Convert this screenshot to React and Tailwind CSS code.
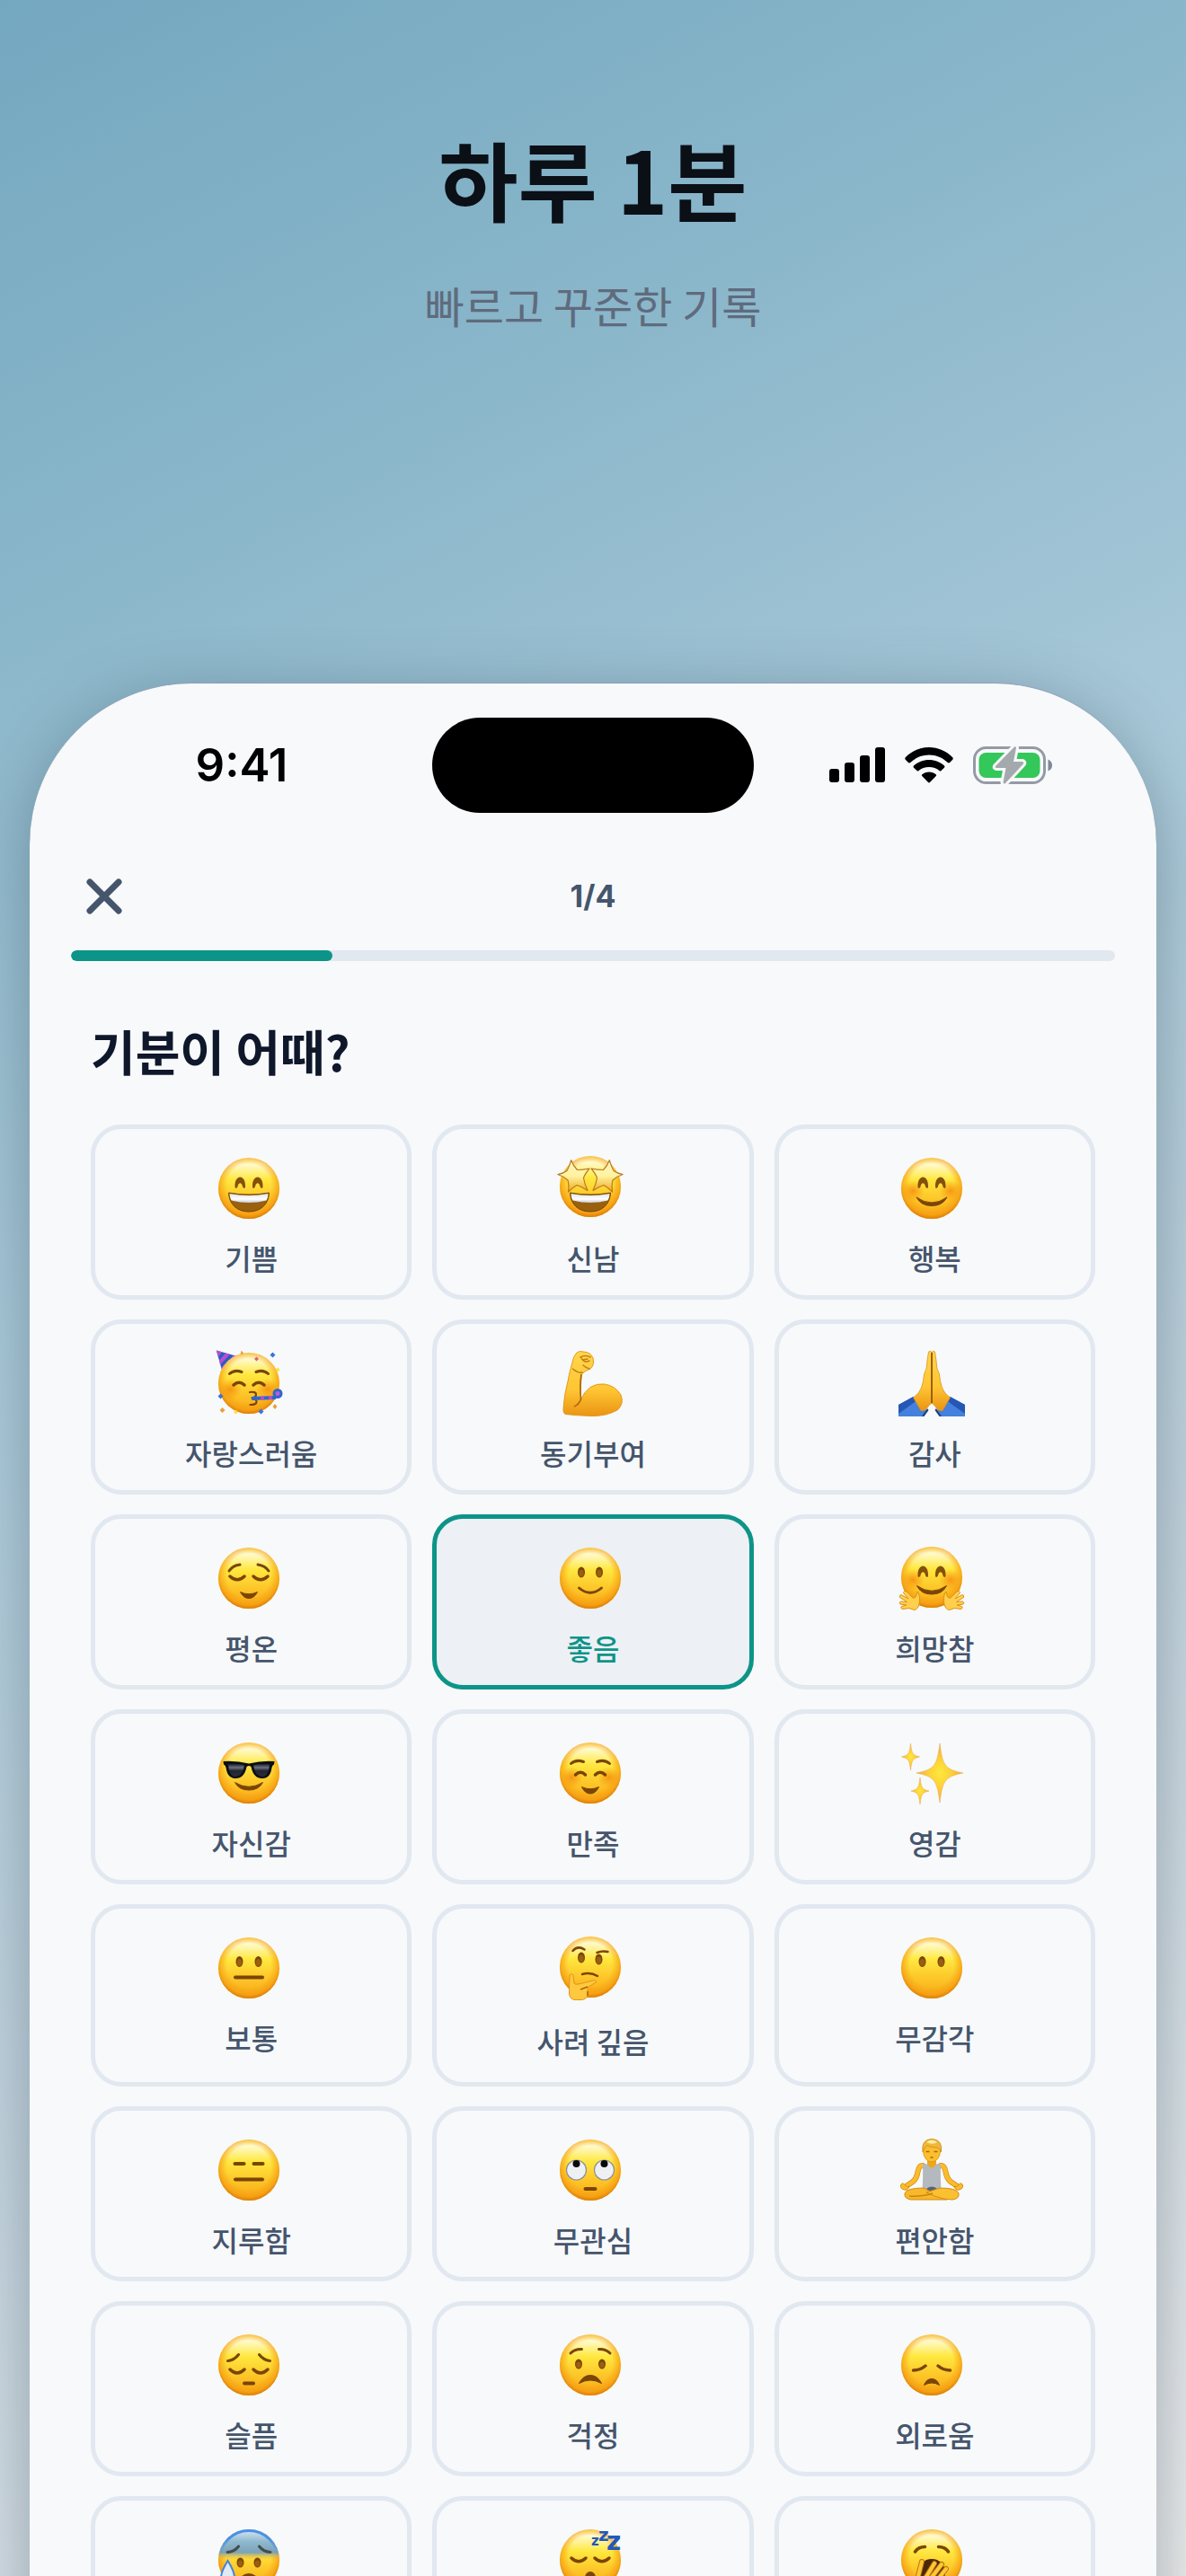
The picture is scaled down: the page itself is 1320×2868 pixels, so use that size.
import { useState } from "react";

const BROWN = "#7a4505";

/* Shared gradients used by every mood drawing. */
function EmojiDefs() {
  return (
    <svg className="absolute h-0 w-0" aria-hidden="true">
      <defs>
        <linearGradient id="skin" x1="0" y1="0" x2="0" y2="1">
          <stop offset="0" stopColor="#fff08a" />
          <stop offset="0.1" stopColor="#fffbd0" />
          <stop offset="0.36" stopColor="#ffe83f" />
          <stop offset="0.62" stopColor="#fdcb2c" />
          <stop offset="1" stopColor="#f8a614" />
        </linearGradient>
        <radialGradient id="rim" cx="0.5" cy="0.46" r="0.54">
          <stop offset="0.66" stopColor="#f59a10" stopOpacity="0" />
          <stop offset="0.88" stopColor="#f59a10" stopOpacity="0.65" />
          <stop offset="1" stopColor="#d97c08" />
        </radialGradient>
        <radialGradient id="blush">
          <stop offset="0" stopColor="#f5870c" stopOpacity="0.8" />
          <stop offset="1" stopColor="#f5930c" stopOpacity="0" />
        </radialGradient>
        <linearGradient id="chill" x1="0" y1="0" x2="0" y2="1">
          <stop offset="0" stopColor="#dbe8f2" />
          <stop offset="0.2" stopColor="#8fb9cf" />
          <stop offset="0.38" stopColor="#7ba3b8" />
          <stop offset="0.5" stopColor="#f5b63c" stopOpacity="0" />
        </linearGradient>
        <linearGradient id="chillRim" x1="0" y1="0" x2="0" y2="1">
          <stop offset="0.15" stopColor="#4a90e8" />
          <stop offset="0.4" stopColor="#4a90e8" stopOpacity="0" />
        </linearGradient>
        <linearGradient id="hand" x1="0" y1="0" x2="0" y2="1">
          <stop offset="0" stopColor="#ffd64d" />
          <stop offset="0.6" stopColor="#ffc533" />
          <stop offset="1" stopColor="#ea9413" />
        </linearGradient>
        <linearGradient id="star" x1="0" y1="0" x2="0" y2="1">
          <stop offset="0" stopColor="#fff6c4" />
          <stop offset="0.5" stopColor="#fff2a0" />
          <stop offset="1" stopColor="#f0a81c" />
        </linearGradient>
        <radialGradient id="spark">
          <stop offset="0" stopColor="#ffe83c" />
          <stop offset="0.5" stopColor="#fcd038" />
          <stop offset="1" stopColor="#efa93a" />
        </radialGradient>
        <linearGradient id="lens" x1="0" y1="0" x2="0" y2="1">
          <stop offset="0" stopColor="#10131c" />
          <stop offset="0.3" stopColor="#6c7282" />
          <stop offset="0.55" stopColor="#23262f" />
          <stop offset="1" stopColor="#2a2d36" />
        </linearGradient>
        <linearGradient id="teeth" x1="0" y1="0" x2="0" y2="1">
          <stop offset="0" stopColor="#dfe4ea" />
          <stop offset="0.6" stopColor="#ffffff" />
          <stop offset="1" stopColor="#c3ccd6" />
        </linearGradient>
      </defs>
    </svg>
  );
}

/* Left half of a symmetric feature plus its reflection around x = 37. */
function Pair({ children }) {
  return (
    <>
      {children}
      <g transform="matrix(-1 0 0 1 74 0)">{children}</g>
    </>
  );
}

function Face({ cy = 40 }) {
  return (
    <>
      <circle cx="37" cy={cy} r="34" fill="url(#skin)" />
      <circle cx="37" cy={cy} r="34" fill="url(#rim)" />
    </>
  );
}

function Line({ d, w = 3 }) {
  return <path d={d} fill="none" stroke={BROWN} strokeWidth={w} strokeLinecap="round" strokeLinejoin="round" />;
}

function Oval({ cx, cy, rx = 4, ry = 6 }) {
  return (
    <>
      <ellipse cx={cx} cy={cy} rx={rx} ry={ry} fill="#7a4505" />
      <ellipse cx={cx} cy={cy + 1} rx={rx - 1.2} ry={ry - 2} fill="#9a5f10" />
    </>
  );
}

function Blush({ cy = 46 }) {
  return (
    <Pair>
      <ellipse cx="16" cy={cy} rx="13" ry="12" fill="url(#blush)" />
    </Pair>
  );
}

function ArchEyes({ y = 0 }) {
  return (
    <Pair>
      <path
        d={`M21.5 ${38 + y}C21 ${24 + y} 33.500 ${24 + y} 33 ${38 + y}C33 ${41 + y} 30.500 ${40 + y} 30 ${38 + y}C29 ${33 + y} 25.500 ${33 + y} 24.500 ${38 + y}C24 ${40 + y} 21.500 ${41 + y} 21.500 ${38 + y}Z`}
        fill="#85500a"
      />
    </Pair>
  );
}

function Grin() {
  return (
    <>
      <path d="M14.500 45Q37 49 59.500 45C59 58 50 66 37 66S15 58 14.500 45Z" fill="#99600f" stroke={BROWN} />
      <path d="M15.500 46Q37 50 58.500 46Q58.500 50 56.500 53.500Q37 58.500 17.500 53.500Q15.500 50 15.500 46Z" fill="url(#teeth)" />
    </>
  );
}

function Star({ flip }) {
  return (
    <path
      transform={flip ? "matrix(-1 0 0 1 74 0)" : undefined}
      d="M.8 24.500Q7 23.500 11 20.500Q14 15 15.700 8.700Q18 15 22.500 19.500Q29 19.500 36 18Q31 24 29.500 28.500Q30.500 35 34 42.500Q27 38 22 36.500Q17.500 39 12.500 44Q13.500 36 12 31Q7 26.500 .8 24.500Z"
      fill="url(#star)"
      stroke="#b97a1c"
      strokeWidth="1.200"
      strokeLinejoin="round"
    />
  );
}

function Spark({ x, y, w, h }) {
  return (
    <path
      d={`M${x} ${y - h}C${x + w * 0.12} ${y - h * 0.25} ${x + w * 0.22} ${y - h * 0.12} ${x + w} ${y}C${x + w * 0.22} ${y + h * 0.12} ${x + w * 0.12} ${y + h * 0.25} ${x} ${y + h}C${x - w * 0.12} ${y + h * 0.25} ${x - w * 0.22} ${y + h * 0.12} ${x - w} ${y}C${x - w * 0.22} ${y - h * 0.12} ${x - w * 0.12} ${y - h * 0.25} ${x} ${y - h}Z`}
      fill="url(#spark)"
      stroke="#f0b04c"
      strokeWidth="0.600"
    />
  );
}

const drawings = {
  joy: (
    <>
      <Face />
      <ArchEyes />
      <Grin />
    </>
  ),
  starStruck: (
    <>
      <Face cy={38} />
      <Grin />
      <Star />
      <Star flip />
    </>
  ),
  happy: (
    <>
      <Face />
      <Blush cy={43} />
      <ArchEyes />
      <path d="M20 50Q37 62 54 50Q49 59.500 37 59.500T20 50Z" fill={BROWN} stroke={BROWN} strokeLinejoin="round" />
    </>
  ),
  party: (
    <>
      <path d="M.8 3.500L24 10L7.500 27Z" fill="#2b5cc4" />
      <path d="M.8 3.500L7 5.200L3 11Z M11 6.500L16 7.800L5 19.500L4 14.500Z M20 9L24 10L7.500 27L6.500 22.500Z" fill="#b34fd0" />
      <Face />
      <Blush cy={47} />
      <Pair>
        <Line d="M15.500 29.500Q21 24.500 29 27.500" />
        <Line d="M20 42Q26 36.500 32 42" w={3.5} />
      </Pair>
      <Line d="M38 50Q45 49 45 52.500T40.500 56.500Q46 58 45.500 61T38.500 64" w={2.2} />
      <path d="M40 57L67 56" stroke="#2f66cf" strokeWidth="4" />
      <path d="M50 56.500h4M59 56h4" stroke="#b34fd0" strokeWidth="4" />
      <circle cx="69" cy="51.500" r="4" fill="#c05ad8" stroke="#2f66cf" strokeWidth="3" />
      <g fill="#3b73dc">
        <path d="M63.500 5.500l3 3l-3 3l-3-3z M5.500 51.500l3 3l-3 3l-3-3z M50.500 68.500l3 3l-3 3l-3-3z" />
      </g>
      <g fill="#e9a03a">
        <path d="M7.500 67l3 3l-3 3l-3-3z M66 63l2.500 3l-2.500 3l-2.500-3z M28.500 3.500l3 3.500l-4 1z" />
      </g>
      <path d="M22.500 69.500l2.500 2.500l-2.500 2.500l-2.500-2.500z M69 22.500l2.500 2.500l-2.500 2.500l-2.500-2.500z" fill="#ffdf3a" />
      <path d="M45.500 10.500l2.500 2.500l-2.500 2.500l-2.500-2.500z" fill="#d8637e" />
    </>
  ),
  muscle: (
    <>
      <path
        d="M17 17Q18 10 22 6Q25 3.500 29 5Q34 5 37 7.500Q41 11 40.500 16Q40.500 22 36 24.500Q31 26 27.500 30Q26 40 26.500 58Q30 50 37 44.500Q44 40 53 41Q65 43 71 53Q75 63 67 70Q54 77 38 76.500Q22 76 9 74.500Q6.500 73 7 68Q8 52 12 38Q13.500 28 17 17Z"
        fill="url(#hand)"
        stroke="#e39a1c"
      />
      <path d="M27 30Q25 42 26.500 58Q24 64 19 66" fill="none" stroke="#a9650c" strokeWidth="1.600" />
      <path d="M17.500 24Q23 29 28 28M26 11Q32 8 37 11M27 12Q30 18 36 15M29 14l5-1M36 24Q31 22 29 20" fill="none" stroke="#c47e12" strokeWidth="1.500" strokeLinecap="round" />
    </>
  ),
  pray: (
    <>
      <Pair>
        <path d="M0 64L16.500 55L26 69L31 69.500L27 77H0Z" fill="#4480dd" />
        <path d="M0 64L16.500 55L19.500 60L0 74Z" fill="#2557b5" />
        <path d="M26 77L32 68L33.500 70L28.500 77Z" fill="#1c3f83" />
        <path d="M33.500 5Q36 3 37 6V62Q33 65 31.500 68Q29 71.500 25 70.500L16.500 56Q23 52 25.500 45Q28 38 28.500 30Q32 24 32 15Z" fill="url(#hand)" stroke="#dd9014" strokeWidth="0.800" />
      </Pair>
      <path d="M37 6V62" stroke="#95590a" strokeWidth="1.800" />
    </>
  ),
  calm: (
    <>
      <Face />
      <Pair>
        <Line d="M15 32Q19 26 27 25" />
        <Line d="M16 38Q24 45.500 32 38" w={3.5} />
      </Pair>
      <path d="M27.500 55.500Q37 60 46.500 55.500Q43 62.500 37 62.500T27.500 55.500Z" fill={BROWN} stroke={BROWN} strokeLinejoin="round" />
    </>
  ),
  good: (
    <>
      <Face />
      <Pair>
        <Oval cx={27} cy={33.5} />
      </Pair>
      <Line d="M24.500 51Q37 61.500 49.500 51" w={2.8} />
    </>
  ),
  hug: (
    <>
      <Face cy={39} />
      <Blush cy={42} />
      <ArchEyes y={-1} />
      <path d="M20.500 48.500Q37 60 53.500 48.500Q49 58 37 58T20.500 48.500Z" fill={BROWN} stroke={BROWN} strokeLinejoin="round" />
      <Pair>
        <path
          d="M21 55Q24 58 23.500 66Q23 73 18.500 75.500Q15 75 12 73.500L4 74.500Q1.500 73 3.500 71.500L9 70L2 69Q0 67 2.500 66L9.500 66.500L1.500 61.500Q.500 59 3 58.500L11 63L5.500 56.500Q6 53.500 9 55L16.500 62.500Q19.500 62 20 59Z"
          fill="#ffcf4d"
          stroke="#dd9116"
        />
      </Pair>
    </>
  ),
  cool: (
    <>
      <Face />
      <path d="M8.500 27Q23 26 37 29.500Q51 26 65.500 27L65 30.500Q63 31 62.500 34Q61 46 52 46Q42 46 39.500 33Q37 31 34.500 33Q32 46 22 46Q13 46 11.500 34Q11 31 9 30.500Z" fill="#0b0e17" />
      <Pair>
        <path d="M14 30Q24 28.500 32 31.500Q30 44 22 44Q15 44 14 30Z" fill="url(#lens)" />
      </Pair>
      <path d="M21.500 50.500Q37 60 52.500 50.500Q48 59 37 59T21.500 50.500Z" fill={BROWN} stroke={BROWN} strokeLinejoin="round" />
    </>
  ),
  content: (
    <>
      <Face />
      <Blush cy={45} />
      <Pair>
        <Line d="M15.500 29.500Q21 24.500 29.500 27.500" />
        <Line d="M20.500 42Q26 36.500 31.500 42" w={3.5} />
      </Pair>
      <path d="M27.500 55.500Q37 60 46.500 55.500Q43 63 37 63T27.500 55.500Z" fill={BROWN} stroke={BROWN} strokeLinejoin="round" />
    </>
  ),
  sparkles: (
    <>
      <Spark x={46} y={40} w={26} h={33} />
      <Spark x={13.5} y={22} w={10} h={15} />
      <Spark x={24} y={60} w={10} h={15} />
    </>
  ),
  neutral: (
    <>
      <Face />
      <Pair>
        <Oval cx={26.5} cy={33} />
      </Pair>
      <Line d="M22 50.500H52" w={4} />
    </>
  ),
  thinking: (
    <>
      <Face cy={39} />
      <Line d="M17.500 21Q23 14.500 30.500 19.500" w={2.5} />
      <Line d="M44.500 23Q50 20.500 56.500 22" w={2.5} />
      <Oval cx={27} cy={28.5} />
      <Oval cx={46.5} cy={30.5} />
      <Line d="M28 47Q37 44.500 45 49" w={2.5} />
      <path d="M14 49Q15 45 18 48L19 57Q20 59 24 58L40 54Q44 53.500 43.500 56L34 61.500V70Q33 75 27 75.500H19Q13.500 74 13.500 68Z" fill="#ffc93f" stroke="#e2951a" />
      <path d="M34 61L26 64M34 66v5" fill="none" stroke="#a9650c" strokeWidth="1.500" />
    </>
  ),
  blank: (
    <>
      <Face />
      <Pair>
        <Oval cx={26.5} cy={33} />
      </Pair>
    </>
  ),
  bored: (
    <>
      <Face />
      <Pair>
        <Line d="M21.500 33H31.500" w={4} />
      </Pair>
      <Line d="M22 50.500H52" w={4} />
    </>
  ),
  eyeRoll: (
    <>
      <Face />
      <Pair>
        <circle cx="21.500" cy="40" r="11" fill="#eef0f4" stroke="#8a8f9a" strokeWidth="1.200" />
        <circle cx="21.500" cy="33" r="4" fill="#0a0a0c" />
      </Pair>
      <Line d="M31.500 61H42.500" w={4} />
    </>
  ),
  yoga: (
    <>
      <path d="M32 28H42V38H32Z" fill="#eea81f" />
      <Pair>
        <path d="M27 35Q22.500 35 21.500 42Q20.500 49 16 53L8.500 58" fill="none" stroke="#d98f16" strokeWidth="6" strokeLinecap="round" strokeLinejoin="round" />
        <path d="M27 35Q22.500 35 21.500 42Q20.500 49 16 53L8.500 58" fill="none" stroke="#fbbc2b" strokeWidth="4.500" strokeLinecap="round" strokeLinejoin="round" />
        <path d="M2.500 57Q4 53 7 56.500T12 58Q11 63 6.500 62T2.500 57Z" fill="#fbbc2b" stroke="#d98f16" />
      </Pair>
      <path d="M27 34Q31 32 32 34Q37 41 42 34Q43 32 47 34Q46.500 46 47.500 64H26.500Q27.500 46 27 34Z" fill="#b3b9bf" />
      <path d="M32 60Q37 57 42 60L44 70H30Z" fill="#566178" />
      <path d="M28 60L54 73H14Q6 72 7 66Q9 60 28 60Z" fill="#f8b829" stroke="#d48a12" />
      <path d="M46 60Q65 60 67 66Q68 72 60 73Q50 73 40 69L31 65Z" fill="#fbc02f" stroke="#d48a12" />
      <path d="M12 69Q24 70 38 66" fill="none" stroke="#c98410" strokeWidth="1.500" />
      <ellipse cx="37" cy="19" rx="9.500" ry="12" fill="#fbbf2e" stroke="#d98f16" strokeWidth="0.800" />
      <path d="M27 20Q25 6 37 5.500Q49.500 6 47.500 20Q46.500 16 43 15Q35 15 32 12.500Q29 15 27 20Z" fill="#f0b83a" stroke="#c9881a" strokeWidth="0.800" />
      <path d="M31 9Q37 4.500 43 9Q38 12.500 31 9Z" fill="#fff0a0" />
      <path d="M30.500 19.500h4M39.500 19.500h4M35.500 26h3" stroke="#a9680c" strokeWidth="1.500" />
    </>
  ),
  sad: (
    <>
      <Face />
      <Pair>
        <Line d="M13.500 35.500Q21 34.500 25.500 28.500" />
        <Line d="M16 45Q24 53 32 45" w={3.5} />
      </Pair>
      <Line d="M32 60.500H42" w={4} />
    </>
  ),
  worried: (
    <>
      <Face />
      <Pair>
        <Line d="M15 27Q20 22 27.500 22.500" />
        <Oval cx={24} cy={39} rx={4} ry={5.5} />
      </Pair>
      <path d="M24.500 60.500Q29 51.500 37 51.500T49.500 60.500Q37 53.500 24.500 60.500Z" fill={BROWN} stroke={BROWN} strokeLinejoin="round" />
    </>
  ),
  lonely: (
    <>
      <Face />
      <Pair>
        <Line d="M16.500 46Q24 46 30 41" w={3.5} />
      </Pair>
      <path d="M28.500 62.500Q31 55.500 37 55.500T45.500 62.500Q37 57.500 28.500 62.500Z" fill={BROWN} stroke={BROWN} strokeLinejoin="round" />
    </>
  ),
  anxious: (
    <>
      <Face />
      <circle cx="37" cy="40" r="34" fill="url(#chill)" />
      <circle cx="37" cy="40" r="32.500" fill="none" stroke="url(#chillRim)" strokeWidth="3" />
      <Pair>
        <path d="M13 31.500Q21 31 25.500 25" fill="none" stroke="#454c50" strokeWidth="3" strokeLinecap="round" />
        <Oval cx={27.5} cy={43} rx={4} ry={5.5} />
      </Pair>
      <Line d="M28 61Q37 52 46 61" w={3} />
      <path d="M13.500 41Q21 53 21 60Q20 67 13.500 67T6 60Q6 53 13.500 41Z" fill="#dfeaf4" stroke="#3f83dd" strokeWidth="2" />
    </>
  ),
  tired: (
    <>
      <Face />
      <Pair>
        <Line d="M16 38Q24 45.500 32 38" w={3.5} />
      </Pair>
      <ellipse cx="37" cy="60" rx="6" ry="7" fill={BROWN} />
      <g fill="#2558b8" fontFamily="'DejaVu Sans', sans-serif" fontWeight="700">
        <text x="38" y="24" fontSize="15">z</text>
        <text x="46" y="19" fontSize="20">z</text>
        <text x="55" y="29" fontSize="28">z</text>
      </g>
    </>
  ),
  yawn: (
    <>
      <Face />
      <Pair>
        <Line d="M18.500 31Q22 25.500 29.500 25.500" w={3.5} />
      </Pair>
      <ellipse cx="37" cy="54" rx="15" ry="15" fill="#4a2808" />
      <path d="M21 62L26 42M29 62L40 44M35 62L48 45M42 64L53 50" fill="none" stroke="#b87610" strokeWidth="6" strokeLinecap="round" />
      <path d="M21 62L26 42M29 62L40 44M35 62L48 45M42 64L53 50" fill="none" stroke="#ffc736" strokeWidth="4" strokeLinecap="round" />
    </>
  ),
};

const moods = [
  { id: "joy", label: "기쁨" },
  { id: "starStruck", label: "신남" },
  { id: "happy", label: "행복" },
  { id: "party", label: "자랑스러움" },
  { id: "muscle", label: "동기부여" },
  { id: "pray", label: "감사" },
  { id: "calm", label: "평온" },
  { id: "good", label: "좋음" },
  { id: "hug", label: "희망참" },
  { id: "cool", label: "자신감" },
  { id: "content", label: "만족" },
  { id: "sparkles", label: "영감" },
  { id: "neutral", label: "보통" },
  { id: "thinking", label: "사려 깊음" },
  { id: "blank", label: "무감각" },
  { id: "bored", label: "지루함" },
  { id: "eyeRoll", label: "무관심" },
  { id: "yoga", label: "편안함" },
  { id: "sad", label: "슬픔" },
  { id: "worried", label: "걱정" },
  { id: "lonely", label: "외로움" },
  { id: "anxious", name: "불안" },
  { id: "tired", name: "피곤" },
  { id: "yawn", name: "지침" },
];

function MoodCard({ id, label, name, selected, onSelect }) {
  return (
    <button
      type="button"
      aria-pressed={selected}
      aria-label={name}
      onClick={onSelect}
      className={
        selected
          ? "flex flex-col items-center justify-start rounded-[34px] border-5 border-[#0d9488] bg-[#edf0f5] pt-[26px] pb-[22px] text-[#0d9488]"
          : "flex flex-col items-center justify-start rounded-[34px] border-5 border-slate-200 pt-[26px] pb-[22px] text-slate-600"
      }
    >
      <svg viewBox="0 0 80 80" className="size-20 shrink-0" aria-hidden="true">
        {drawings[id]}
      </svg>
      {label && (
        <span className={label.includes(" ") ? "mt-[17px] text-[32px] leading-12 font-medium" : "mt-[17px] text-[32px] leading-10 font-medium"}>
          {label}
        </span>
      )}
    </button>
  );
}

function StatusIcons() {
  return (
    <div className="flex items-center gap-[22px]">
      <svg viewBox="0 0 62 40" className="h-10 w-[62px]" aria-hidden="true">
        <rect x="0" y="24" width="11" height="15" rx="3" />
        <rect x="17" y="17" width="11" height="22" rx="3" />
        <rect x="34" y="9" width="11" height="30" rx="3" />
        <rect x="51" y="0" width="11" height="39" rx="3" />
      </svg>
      <svg viewBox="0 0 54 40" className="h-10 w-[54px]" aria-hidden="true">
        <path d="M27 0C37 0 46 4 53 11Q54.500 12.500 53 14L50 17Q49 18 47.500 16.800C42 11.500 35 8.500 27 8.500S12 11.500 6.500 16.800Q5 18 4 17L1 14Q-.5 12.500 1 11C8 4 17 0 27 0Z" />
        <path d="M27 14C33.500 14 39.500 16.500 44 20.500Q45 21.700 44 22.700L40.500 26Q39.500 27 38.500 26C35.500 23.500 31.500 22 27 22S18.500 23.500 15.500 26Q14.500 27 13.500 26L10 22.700Q9 21.700 10 20.500C14.500 16.500 20.500 14 27 14Z" />
        <path d="M27 27.500C30 27.500 33 28.500 35 30.500Q35.500 31.300 34.800 32L28.200 38.800Q27 40 25.800 38.800L19.200 32Q18.500 31.300 19 30.500C21 28.500 24 27.500 27 27.500Z" />
      </svg>
      <svg viewBox="0 0 88 44" className="h-11 w-[88px]" aria-hidden="true">
        <rect x="1.500" y="2.500" width="78" height="39" rx="13" fill="none" stroke="#949aa5" strokeWidth="3" />
        <path d="M83.500 15.500Q88 17.500 88 22T83.500 28.500Z" fill="#7d8896" />
        <rect x="6.500" y="8" width="68" height="28" rx="8" fill="#34c759" />
        <path
          d="M46 1.500L25 23Q24 25 26.500 25H36.500L33.500 41Q34 43.500 36 42L56 20.500Q57 18.500 54.500 18H45L48 2.500Q47.500 .5 46 1.500Z"
          fill="#a4a9ad"
          stroke="#f7f9fb"
          strokeWidth="6"
          strokeLinejoin="round"
          paintOrder="stroke"
        />
      </svg>
    </div>
  );
}

export default function App() {
  const [selected, setSelected] = useState("good");

  return (
    <div className="relative flex h-screen flex-col overflow-hidden bg-[linear-gradient(153deg,#74a8c0_0%,#88b5c9_18%,#a9c9d9_42%,#c5d5df_68%,#ececec_100%)] font-['Inter','Noto_Sans_CJK_KR',sans-serif]">
      <EmojiDefs />
      <header className="shrink-0 pt-[138px] text-center">
        <h1 className="font-['Noto_Sans_CJK_KR',sans-serif] text-8xl leading-[120px] font-bold text-[#0b0f16]">하루 1분</h1>
        <p className="mt-[49px] font-['Noto_Sans_CJK_KR',sans-serif] text-5xl leading-16 text-[#5f6b7d]">빠르고 꾸준한 기록</p>
      </header>

      <main className="mx-[33px] mt-[389px] flex-none rounded-t-[180px] border-t border-slate-400 bg-[#f7f9fb] shadow-[0_16px_70px_rgba(40,60,75,0.38)]">
        <div className="grid grid-cols-[1fr_358px_1fr] items-center pt-[38px]">
          <time className="pl-6 text-center text-[51px] leading-16 font-semibold text-black">9:41</time>
          <div className="h-[106px] rounded-full bg-black" />
          <div className="flex justify-center pr-8">
            <StatusIcons />
          </div>
        </div>

        <div className="mt-[65px] px-[46px]">
          <div className="grid h-14 grid-cols-3 items-center px-[17px]">
            <button type="button" aria-label="닫기" className="size-10 text-slate-600">
              <svg viewBox="0 0 40 40" className="size-10" aria-hidden="true">
                <path d="M4 4L36 36M36 4L4 36" fill="none" stroke="currentColor" strokeWidth="7" strokeLinecap="round" />
              </svg>
            </button>
            <span className="text-center text-[34px] leading-10 font-bold text-slate-600">1/4</span>
          </div>
          <div
            role="progressbar"
            aria-label="진행률"
            aria-valuemin={0}
            aria-valuemax={4}
            aria-valuenow={1}
            className="mt-8 h-3 overflow-hidden rounded-full bg-slate-200"
          >
            <div className="h-full w-1/4 rounded-full bg-[#0d9488]" />
          </div>
        </div>

        <section className="px-[68px] pb-16">
          <h2 className="mt-16 font-['Noto_Sans_CJK_KR',sans-serif] text-[54px] leading-[72px] font-bold text-slate-900">기분이 어때?</h2>
          <div className="mt-[46px] grid grid-cols-3 gap-x-[23px] gap-y-[22px] font-['Noto_Sans_CJK_KR',sans-serif]">
            {moods.map((mood) => (
              <MoodCard key={mood.id} {...mood} selected={selected === mood.id} onSelect={() => setSelected(mood.id)} />
            ))}
          </div>
        </section>
      </main>
    </div>
  );
}
